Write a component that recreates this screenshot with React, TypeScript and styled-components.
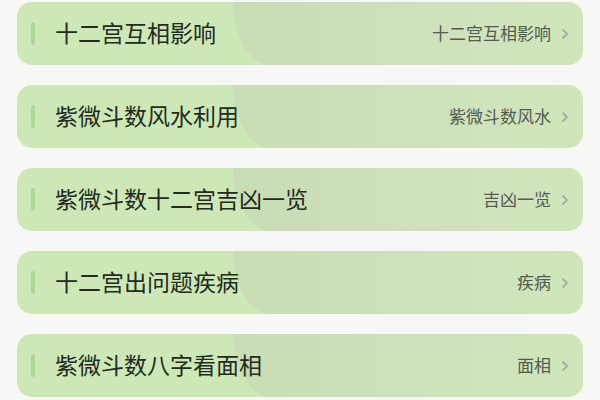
import styled, { createGlobalStyle } from 'styled-components';

const items = [
  { title: '十二宫互相影响', tag: '十二宫互相影响' },
  { title: '紫微斗数风水利用', tag: '紫微斗数风水' },
  { title: '紫微斗数十二宫吉凶一览', tag: '吉凶一览' },
  { title: '十二宫出问题疾病', tag: '疾病' },
  { title: '紫微斗数八字看面相', tag: '面相' },
];

function Chevron() {
  return (
    <svg width="8" height="12" viewBox="0 0 8 12" fill="none">
      <path d="M2 2l4 4-4 4" stroke="#a9aca6" strokeWidth="1.8" strokeLinecap="round" strokeLinejoin="round" />
    </svg>
  );
}

export default function App() {
  return (
    <>
      <GlobalStyle />
      <List>
        {items.map(item => (
          <Card key={item.title}>
            <Accent />
            <Title>{item.title}</Title>
            <Tag>{item.tag}</Tag>
            <Arrow>
              <Chevron />
            </Arrow>
          </Card>
        ))}
      </List>
    </>
  );
}

const GlobalStyle = createGlobalStyle`
  body {
    margin: 0;
    background: #f7f8f6;
    font-family: "Noto Sans CJK SC", "Noto Sans", sans-serif;
  }
`;

const List = styled.div`
  display: flex;
  flex-direction: column;
  gap: 20px;
  padding: 2px 17px 0 17px;
`;

const Card = styled.div`
  position: relative;
  overflow: hidden;
  height: 63px;
  border-radius: 15px;
  background: #cee7b6;
  display: flex;
  align-items: center;
  padding: 0 14px;

  &::before {
    content: '';
    position: absolute;
    top: 0;
    bottom: 0;
    left: 216px;
    right: 0;
    border-bottom-left-radius: 38px 100%;
    background: linear-gradient(90deg, #c9dcb4 0%, #cddfbb 40%, #d0e3bc 75%, #cfe6b9 100%);
  }
`;

const Accent = styled.span`
  position: relative;
  width: 4px;
  height: 23px;
  border-radius: 2px;
  background: #b0d695;
  margin-right: 20px;
`;

const Title = styled.span`
  position: relative;
  flex: 1;
  font-size: 23px;
  line-height: 1;
  font-weight: 400;
  color: #222b21;
  margin-top: -3px;
`;

const Tag = styled.span`
  position: relative;
  font-size: 17px;
  line-height: 1;
  color: #545b52;
  margin-top: -2px;
`;

const Arrow = styled.span`
  position: relative;
  display: flex;
  align-items: center;
  margin-left: 10px;
`;
